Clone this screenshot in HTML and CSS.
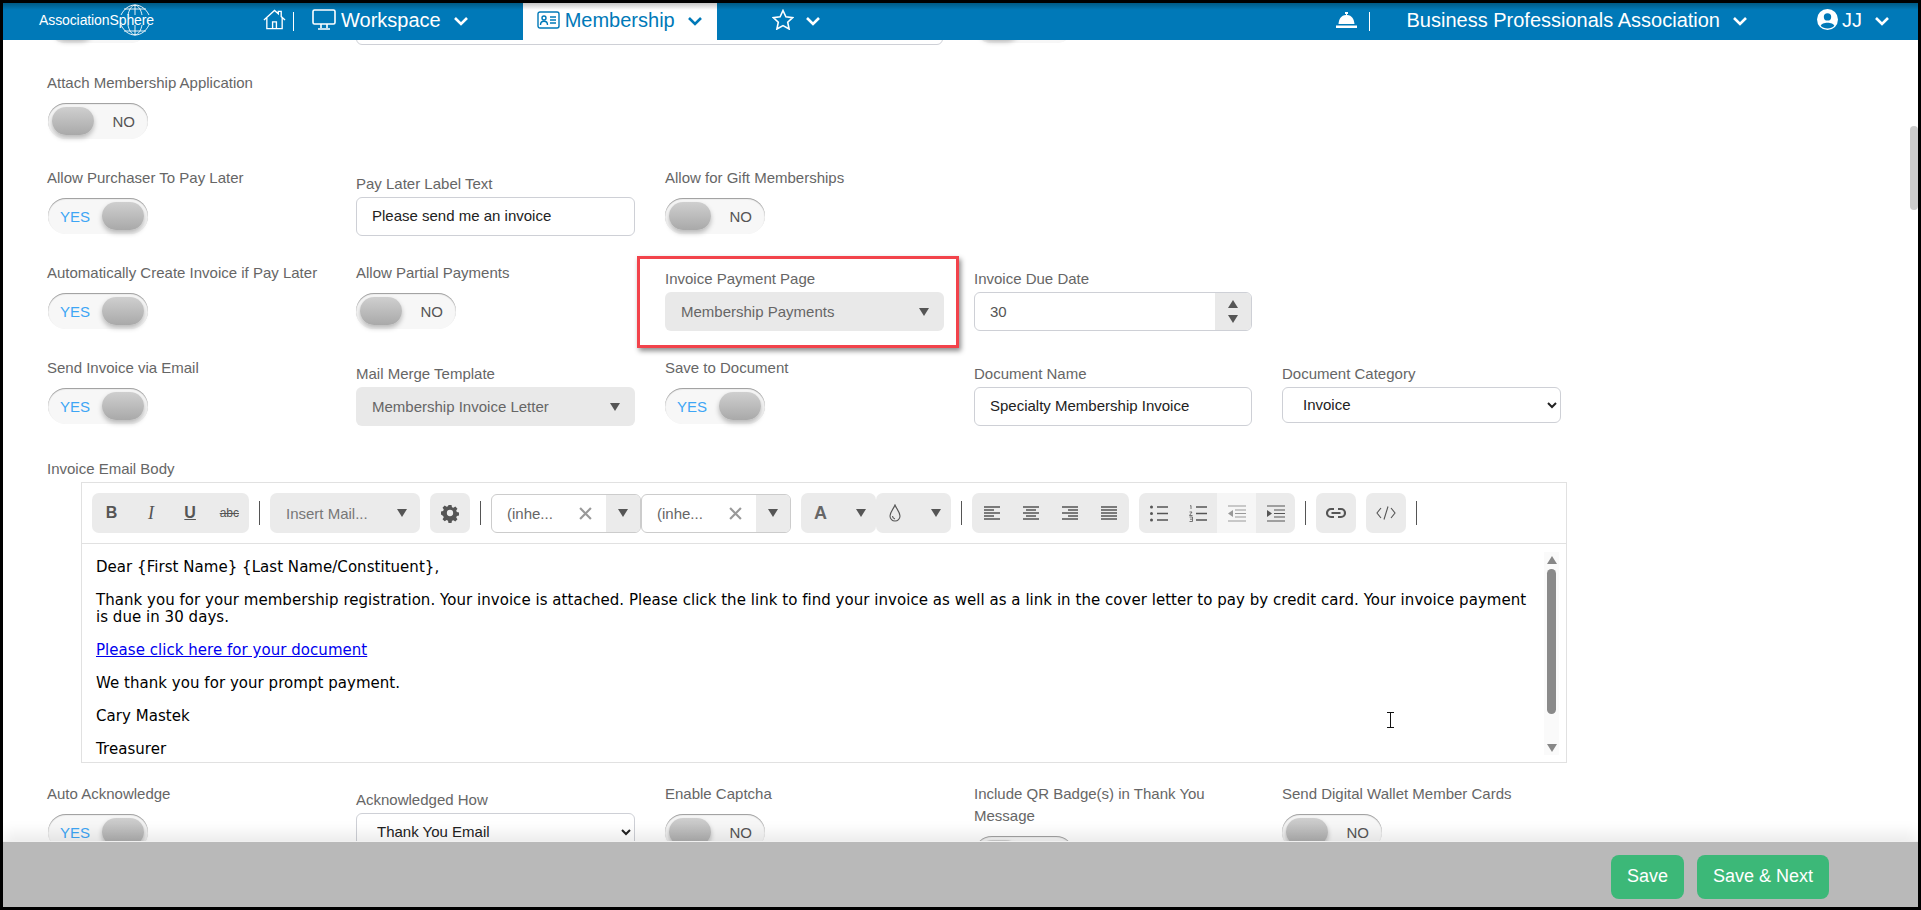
FILE: index.html
```html
<!DOCTYPE html>
<html lang="en">
<head>
    <meta charset="UTF-8">
    <meta name="viewport" content="width=device-width, initial-scale=1.0">
    <title>Membership</title>
    <link rel="stylesheet" href="styles.css">
</head>
<body>
<svg class="sprites" width="0" height="0">
    <symbol id="chev" viewBox="0 0 16 10"><path d="M2 2l6 6 6-6" fill="none" stroke="currentColor" stroke-width="2.6"/></symbol>
    <symbol id="tri" viewBox="0 0 10 8"><path d="M0 0h10L5 8z" fill="currentColor"/></symbol>
</svg>
<div class="frame">
    <header class="topbar">
        <div class="logo">
            <span class="logo-text">AssociationSphere</span>
            <svg class="logo-globe" viewBox="0 0 40 32" fill="none" stroke="#fff" stroke-width="0.9">
                <path d="M6 11C9 5 14 1 20 1s11 4 14 10M13 11c1-5 3-9 7-10 4 1 6 5 7 10M20 1v10M9 5h22"/>
                <path d="M6 21c3 6 8 10 14 10s11-4 14-10M13 21c1 5 3 9 7 10 4-1 6-5 7-10M20 21v10M9 27h22"/>
            </svg>
        </div>
        <svg class="ico-home" viewBox="0 0 24 21" fill="none" stroke="#fff" stroke-width="1.4"><path d="M1 11L12 1l4 3.6V2h3v5.5l4 3.5M4 9v11h16V9M10 20v-7h4v7"/></svg>
        <span class="bar-sep"></span>
        <svg class="ico-monitor" viewBox="0 0 24 21" fill="none" stroke="#fff" stroke-width="1.6"><rect x="1" y="1" width="22" height="14" rx="1.5"/><path d="M9 15v4M15 15v4M6 20h12"/></svg>
        <span class="nav-text">Workspace</span>
        <svg class="chev"><use href="#chev"/></svg>
        <div class="nav-tab">
            <svg class="ico-card" viewBox="0 0 23 18" fill="none" stroke="currentColor" stroke-width="1.4"><rect x="1" y="1" width="21" height="16" rx="2"/><circle cx="7" cy="7" r="2"/><path d="M3.5 14c0-5 7-5 7 0M13 6h6M13 9h6M13 12h6"/></svg>
            <span class="nav-text">Membership</span>
            <svg class="chev"><use href="#chev"/></svg>
        </div>
        <svg class="ico-star" viewBox="0 0 22 21" fill="none" stroke="#fff" stroke-width="1.6"><path d="M11 1.5l2.9 6.3 6.8.8-5 4.6 1.4 6.8-6.1-3.4-6.1 3.4 1.4-6.8-5-4.6 6.8-.8z"/></svg>
        <svg class="chev"><use href="#chev"/></svg>
        <div class="topbar-right">
            <svg class="ico-bell" viewBox="0 0 21 16" fill="#fff"><path d="M9 0h3v2h-1v1c5 .4 7 4 7.500 9h-16C3 7 5 3.400 10 3V2H9zM0 13.500h21V16H0z"/></svg>
            <span class="bar-sep"></span>
            <span class="nav-text org-name">Business Professionals Association</span>
            <svg class="chev"><use href="#chev"/></svg>
            <svg class="ico-user" viewBox="0 0 20 20"><circle cx="10" cy="10" r="10" fill="#fff"/><circle cx="10" cy="7.500" r="3.500" fill="#0079b8"/><path d="M3.500 16c1-4 12-4 13 0-3 3.500-10 3.500-13 0z" fill="#0079b8"/></svg>
            <span class="nav-text user-name">JJ</span>
            <svg class="chev"><use href="#chev"/></svg>
        </div>
    </header>

    <main class="content">
        <div class="form-scroll">
            <div class="form-row first-row">
                <div class="field toggle-only"><div class="toggle off"><span class="knob"></span></div></div>
                <div class="field wide-field"><input class="text-input" type="text"></div>
                <div class="field toggle-only col-four"><div class="toggle off"><span class="knob"></span></div></div>
            </div>

            <div class="form-row">
                <div class="field"><div class="label">Attach Membership Application</div><div class="toggle off"><span class="knob"></span><span class="toggle-text">NO</span></div></div>
            </div>

            <div class="form-row">
                <div class="field"><div class="label">Allow Purchaser To Pay Later</div><div class="toggle on"><span class="toggle-text">YES</span><span class="knob"></span></div></div>
                <div class="field"><div class="label text-label">Pay Later Label Text</div><input class="text-input" type="text" value="Please send me an invoice"></div>
                <div class="field"><div class="label">Allow for Gift Memberships</div><div class="toggle off"><span class="knob"></span><span class="toggle-text">NO</span></div></div>
            </div>

            <div class="form-row">
                <div class="field"><div class="label">Automatically Create Invoice if Pay Later</div><div class="toggle on"><span class="toggle-text">YES</span><span class="knob"></span></div></div>
                <div class="field"><div class="label">Allow Partial Payments</div><div class="toggle off"><span class="knob"></span><span class="toggle-text">NO</span></div></div>
                <div class="field highlighted">
                    <div class="label text-label">Invoice Payment Page</div>
                    <div class="drop-list"><span>Membership Payments</span><svg class="tri"><use href="#tri"/></svg></div>
                    <div class="callout"></div>
                </div>
                <div class="field">
                    <div class="label text-label">Invoice Due Date</div>
                    <div class="num-input"><span class="num-value">30</span><div class="num-steps"><svg class="step"><use href="#tri"/></svg><svg class="step down"><use href="#tri"/></svg></div></div>
                </div>
            </div>

            <div class="form-row">
                <div class="field"><div class="label">Send Invoice via Email</div><div class="toggle on"><span class="toggle-text">YES</span><span class="knob"></span></div></div>
                <div class="field"><div class="label text-label">Mail Merge Template</div><div class="drop-list"><span>Membership Invoice Letter</span><svg class="tri"><use href="#tri"/></svg></div></div>
                <div class="field"><div class="label">Save to Document</div><div class="toggle on"><span class="toggle-text">YES</span><span class="knob"></span></div></div>
                <div class="field"><div class="label text-label">Document Name</div><input class="text-input doc-name" type="text" value="Specialty Membership Invoice"></div>
                <div class="field"><div class="label text-label">Document Category</div><select class="native-select"><option>Invoice</option></select></div>
            </div>

            <div class="editor-block">
                <div class="label">Invoice Email Body</div>
                <div class="editor">
                    <div class="toolbar">
                        <div class="tool-group wide-tools">
                            <span class="tool tool-b">B</span>
                            <span class="tool tool-i">I</span>
                            <span class="tool tool-u">U</span>
                            <span class="tool tool-s">abc</span>
                        </div>
                        <span class="tool-sep"></span>
                        <div class="tool-group merge-drop"><span>Insert Mail...</span><svg class="tri"><use href="#tri"/></svg></div>
                        <div class="tool-group">
                            <span class="tool tool-gear">
                                <svg viewBox="0 0 20 20" fill="#555"><path fill-rule="evenodd" d="M8.300 1h3.400l.5 2.500 1.600.7 2.100-1.400 2.400 2.400-1.400 2.100.7 1.600 2.400.5v3.400l-2.400.5-.7 1.600 1.400 2.100-2.400 2.400-2.100-1.400-1.600.7-.5 2.300H8.300l-.5-2.400-1.600-.7-2.100 1.400-2.400-2.400 1.400-2.100-.7-1.600L0 11.700V8.300l2.400-.5.7-1.600-1.400-2.100 2.400-2.400 2.100 1.400 1.600-.7zM10 6.500a3.500 3.500 0 100 7 3.500 3.500 0 000-7z" transform="translate(1 1) scale(.9)"/></svg>
                            </span>
                        </div>
                        <span class="tool-sep"></span>
                        <div class="tool-pair">
                            <div class="font-pick"><span class="font-value">(inhe...</span><svg class="font-clear" viewBox="0 0 12 12" stroke="#999" stroke-width="2"><path d="M1 1l10 10M11 1L1 11"/></svg><span class="font-arrow"><svg class="tri"><use href="#tri"/></svg></span></div>
                            <div class="font-pick"><span class="font-value">(inhe...</span><svg class="font-clear" viewBox="0 0 12 12" stroke="#999" stroke-width="2"><path d="M1 1l10 10M11 1L1 11"/></svg><span class="font-arrow"><svg class="tri"><use href="#tri"/></svg></span></div>
                        </div>
                        <div class="tool-pair">
                            <div class="tool-group color-drop"><span class="color-a">A</span><svg class="tri"><use href="#tri"/></svg></div>
                            <div class="tool-group color-drop">
                                <svg class="ico-drop" viewBox="0 0 12 18" fill="none" stroke="#555" stroke-width="1.100"><path d="M6 1C4.500 5 1 8 1 12a5 5 0 0010 0C11 8 7.500 5 6 1zM3.500 12c0 1.500 1 2.500 2.500 3"/></svg>
                                <svg class="tri"><use href="#tri"/></svg>
                            </div>
                        </div>
                        <span class="tool-sep"></span>
                        <div class="tool-group wide-tools">
                            <span class="tool"><svg class="ico-lines" viewBox="0 0 16 14" stroke="#555" stroke-width="1.300"><path d="M0 1h16M0 4h10M0 7h16M0 10h10M0 13h16"/></svg></span>
                            <span class="tool"><svg class="ico-lines" viewBox="0 0 16 14" stroke="#555" stroke-width="1.300"><path d="M0 1h16M3 4h10M0 7h16M3 10h10M0 13h16"/></svg></span>
                            <span class="tool"><svg class="ico-lines" viewBox="0 0 16 14" stroke="#555" stroke-width="1.300"><path d="M0 1h16M6 4h10M0 7h16M6 10h10M0 13h16"/></svg></span>
                            <span class="tool"><svg class="ico-lines" viewBox="0 0 16 14" stroke="#555" stroke-width="1.300"><path d="M0 1h16M0 4h16M0 7h16M0 10h16M0 13h16"/></svg></span>
                        </div>
                        <div class="tool-group">
                            <span class="tool"><svg class="ico-list" viewBox="0 0 18 17"><g fill="#555"><circle cx="1.500" cy="2" r="1.500"/><circle cx="1.500" cy="8.500" r="1.500"/><circle cx="1.500" cy="15" r="1.500"/></g><path d="M7 2h11M7 8.500h11M7 15h11" stroke="#555" stroke-width="1.500"/></svg></span>
                            <span class="tool"><svg class="ico-list" viewBox="0 0 18 17"><path d="M1 1l1-.5V4M.5 7h2.500L.5 10.500h3M.5 12h3v4.500h-3M1 14.200h2" fill="none" stroke="#555" stroke-width=".8"/><path d="M7 2h11M7 8.500h11M7 15h11" stroke="#555" stroke-width="1.500"/></svg></span>
                            <span class="tool tool-dim"><svg class="ico-list" viewBox="0 0 18 17"><path d="M0 1h18M7 5h11M7 8.500h11M7 12h11M0 16h18" stroke="#999" stroke-width="1.200"/><path d="M5 5v7L0 8.500z" fill="#999"/></svg></span>
                            <span class="tool"><svg class="ico-list" viewBox="0 0 18 17"><path d="M0 1h18M7 5h11M7 8.500h11M7 12h11M0 16h18" stroke="#555" stroke-width="1.200"/><path d="M0 5v7l5-3.500z" fill="#555"/></svg></span>
                        </div>
                        <span class="tool-sep"></span>
                        <div class="tool-group">
                            <span class="tool tool-sm"><svg class="ico-link" viewBox="0 0 20 12" fill="none" stroke="#555" stroke-width="2.200"><path d="M8 2H5a4 4 0 000 8h3M12 2h3a4 4 0 010 8h-3M5.500 6h9"/></svg></span>
                        </div>
                        <div class="tool-group">
                            <span class="tool tool-sm"><svg class="ico-code" viewBox="0 0 20 14" fill="none" stroke="#555" stroke-width="1.100"><path d="M5 2L1 7l4 5M15 2l4 5-4 5M12 .5L8 13.500"/></svg></span>
                        </div>
                        <span class="tool-sep"></span>
                    </div>
                    <div class="editor-body">
                        <div class="editor-text">
                            <p>Dear {First Name} {Last Name/Constituent},</p>
                            <p>Thank you for your membership registration. Your invoice is attached. Please click the link to find your invoice as well as a link in the cover letter to pay by credit card. Your invoice payment is due in 30 days.</p>
                            <p><a class="doc-link" href="#">Please click here for your document</a></p>
                            <p>We thank you for your prompt payment.</p>
                            <p>Cary Mastek</p>
                            <p>Treasurer</p>
                        </div>
                        <div class="editor-scroll">
                            <svg class="scroll-arrow up"><use href="#tri"/></svg>
                            <span class="scroll-thumb"></span>
                            <svg class="scroll-arrow"><use href="#tri"/></svg>
                        </div>
                        <svg class="ibeam" viewBox="0 0 7 16" fill="none" stroke="#111"><path d="M0 .5h7M0 15.500h7M3.500 .5v15"/></svg>
                    </div>
                </div>
            </div>

            <div class="form-row last-row">
                <div class="field"><div class="label">Auto Acknowledge</div><div class="toggle on"><span class="toggle-text">YES</span><span class="knob"></span></div></div>
                <div class="field"><div class="label text-label">Acknowledged How</div><select class="native-select tall-select"><option>Thank You Email</option></select></div>
                <div class="field"><div class="label">Enable Captcha</div><div class="toggle off"><span class="knob"></span><span class="toggle-text">NO</span></div></div>
                <div class="field"><div class="label">Include QR Badge(s) in Thank You Message</div><div class="toggle off"><span class="knob"></span></div></div>
                <div class="field"><div class="label">Send Digital Wallet Member Cards</div><div class="toggle off"><span class="knob"></span><span class="toggle-text">NO</span></div></div>
            </div>
        </div>
        <span class="page-thumb"></span>
    </main>

    <footer class="savebar">
        <button class="btn-save">Save</button>
        <button class="btn-save">Save &amp; Next</button>
    </footer>
</div>
</body>
</html>
```

FILE: styles.css
```css
* { margin: 0; padding: 0; box-sizing: border-box; }
body { background: #fff; font-family: "Liberation Sans", Arial, sans-serif; overflow: hidden; }
.sprites { position: absolute; }

.frame {
    width: 1921px;
    height: 910px;
    border: 3px solid #000;
    display: flex;
    flex-direction: column;
    overflow: hidden;
}

/* top bar */
.topbar {
    height: 37px;
    flex: none;
    display: flex;
    align-items: center;
    color: #fff;
    background: linear-gradient(#005a84 0, #0079b8 7px);
    position: relative;
    z-index: 2;
}
.logo { margin-left: 36px; width: 116px; height: 37px; position: relative; display: flex; align-items: center; flex: none; }
.logo-text { font-size: 14px; letter-spacing: -0.1px; white-space: nowrap; margin-bottom: 3px; }
.logo-globe { position: absolute; left: 76px; top: 1px; width: 40px; height: 32px; }
.ico-home { width: 23px; height: 21px; margin: 0 0 4px 108px; }
.bar-sep { width: 1px; height: 19px; background: #fff; margin-left: 7px; }
.ico-monitor { width: 24px; height: 21px; margin: 0 0 4px 18px; }
.nav-text { font-size: 20px; margin-left: 5px; white-space: nowrap; padding-bottom: 2px; }
.chev { width: 16px; height: 10px; margin: 0 0 2px 12px; }
.nav-tab {
    width: 194px;
    height: 37px;
    margin-left: 54px;
    padding-left: 14px;
    display: flex;
    align-items: center;
    color: #0079b8;
    background: linear-gradient(#c4c4c4 0, #fff 7px);
}
.ico-card { width: 23px; height: 18px; margin-bottom: 3px; }
.ico-star { width: 22px; height: 21px; margin: 0 0 4px 55px; }
.ico-star + .chev { margin-left: 11px; }
.topbar-right { margin-left: auto; display: flex; align-items: center; padding-right: 28px; }
.ico-bell { width: 21px; height: 16px; margin-bottom: 4px; }
.topbar-right .bar-sep { margin-left: 12px; }
.org-name { margin-left: 37px; }
.ico-user { width: 21px; height: 21px; margin: 0 0 4px 69px; }
.user-name { margin-left: 4px; }

/* form */
.content { flex: 1; min-height: 0; overflow: hidden; position: relative; }
.form-scroll { margin-top: -64px; padding-left: 44px; }
.form-row { display: grid; grid-template-columns: 309px 309px 309px 308px 309px; height: 95px; }
.first-row { height: 96px; }
.field { position: relative; width: 279px; }
.field:first-child .toggle { margin-left: 1px; }
.wide-field { width: 587px; grid-column: span 2; padding-top: 30px; }
.wide-field .text-input { width: 587px; }
.toggle-only { padding-top: 31px; }
.col-four { grid-column: 4; }
.label { font-size: 15px; line-height: 22px; color: #666; margin-bottom: 9px; }
.text-label { padding-top: 6px; margin-bottom: 2px; box-sizing: content-box; }

.toggle {
    width: 100px;
    height: 36px;
    border-radius: 18px;
    background: #f7f7f7;
    box-shadow: inset 0 1px 1px #999;
    display: flex;
    align-items: center;
    justify-content: space-between;
    padding: 0 4px;
    font-size: 15px;
}
.knob {
    width: 42px;
    height: 28px;
    border-radius: 14px;
    background: linear-gradient(#cfcfcf, #a9a9a9);
    box-shadow: 0 3px 5px rgba(0, 0, 0, 0.25);
}
.toggle.off .toggle-text { color: #555; margin-right: 9px; }
.toggle.on .toggle-text { color: #3ea6f5; margin-left: 8px; }

.text-input {
    display: block;
    width: 279px;
    height: 39px;
    border: 1px solid #ced0d6;
    border-radius: 6px;
    padding: 0 15px 2px;
    font: 15px "Liberation Sans", Arial, sans-serif;
    color: #222;
    background: #fff;
}
.text-input.doc-name { width: 278px; }
.drop-list {
    width: 279px;
    height: 39px;
    border-radius: 6px;
    background: #e9e9e9;
    color: #666;
    font-size: 15px;
    padding: 0 15px 0 16px;
    display: flex;
    align-items: center;
    justify-content: space-between;
}
.tri { width: 10px; height: 8px; color: #555; flex: none; }
.num-input {
    width: 278px;
    height: 39px;
    border: 1px solid #ced0d6;
    border-radius: 6px;
    display: flex;
    align-items: center;
    justify-content: space-between;
    font-size: 15px;
    color: #555;
    overflow: hidden;
}
.num-value { padding-left: 15px; }
.num-steps {
    width: 36px;
    height: 100%;
    background: #e9e9e9;
    display: flex;
    flex-direction: column;
    align-items: center;
    justify-content: center;
    gap: 7px;
    color: #555;
}
.step { width: 10px; height: 8px; transform: rotate(180deg); }
.step.down { transform: none; }
.native-select {
    display: block;
    width: 279px;
    height: 36px;
    border: 1px solid #ced0d6;
    border-radius: 6px;
    background: #fff;
    padding: 0 0 2px 16px;
    font: 15px "Liberation Sans", Arial, sans-serif;
    color: #222;
}
.tall-select { height: 39px; }

.callout {
    position: absolute;
    left: -28px;
    top: -6px;
    width: 322px;
    height: 92px;
    border: 3px solid #f2434b;
    box-shadow: 2px 3px 5px rgba(0, 0, 0, 0.45);
}

/* editor */
.editor-block { height: 325px; margin-top: 6px; }
.editor-block .label { margin-bottom: 2px; }
.editor {
    width: 1486px;
    height: 281px;
    margin-left: 34px;
    border: 1px solid #e1e1e1;
}
.toolbar {
    height: 61px;
    border-bottom: 1px solid #e1e1e1;
    display: flex;
    align-items: center;
    gap: 10px;
    padding-left: 10px;
}
.tool-group { display: flex; height: 40px; border-radius: 7px; background: #ebebeb; overflow: hidden; color: #555; flex: none; }
.tool { width: 39px; display: flex; align-items: center; justify-content: center; font-size: 16px; }
.wide-tools .tool { width: 39.25px; }
.tool-b { font-weight: bold; }
.tool-i { font-family: "Liberation Serif", serif; font-style: italic; font-size: 18px; }
.tool-u { font-weight: bold; text-decoration: underline; }
.tool-s { font-size: 12px; text-decoration: line-through; }
.tool-gear { width: 40px; }
.tool-gear svg { width: 20px; height: 20px; }
.tool-sep { width: 1px; height: 24px; background: #555; flex: none; }
.merge-drop { width: 150px; align-items: center; justify-content: space-between; padding: 0 13px 0 16px; font-size: 15px; color: #777; }
.tool-pair { display: flex; flex: none; }
.font-pick {
    width: 150px;
    height: 39px;
    border: 1px solid #ccc;
    border-radius: 6px;
    display: flex;
    align-items: center;
    font-size: 15px;
    color: #666;
    overflow: hidden;
}
.font-value { padding-left: 15px; width: 87px; }
.font-clear { width: 13px; height: 13px; margin-right: 14px; flex: none; }
.font-arrow { flex: 1; height: 100%; background: #ebebeb; display: flex; align-items: center; justify-content: center; }
.color-drop { width: 75px; align-items: center; justify-content: space-between; padding: 0 10px 0 13px; }
.color-a { font-size: 18px; font-weight: bold; color: #666; }
.ico-drop { width: 12px; height: 18px; }
.ico-lines { width: 16px; height: 14px; }
.ico-list { width: 18px; height: 17px; }
.tool-dim { background: #f6f6f6; }
.tool-sm { width: 40px; }
.ico-link { width: 20px; height: 14px; }
.ico-code { width: 20px; height: 14px; }

.editor-body { height: 219px; display: flex; position: relative; overflow: hidden; }
.editor-text {
    flex: 1;
    padding: 15px 14px 0;
    font-family: "DejaVu Sans", Verdana, sans-serif;
    font-size: 15px;
    letter-spacing: 0.04px;
    line-height: 17px;
    color: #000;
}
.editor-text p { margin-bottom: 16px; }
.editor-text p:last-child { margin-bottom: 0; }
.doc-link { color: #0000ee; }
.editor-scroll {
    width: 15px;
    margin: 8px 7px 8px 0;
    background: #fafafa;
    display: flex;
    flex-direction: column;
    align-items: center;
    flex: none;
}
.scroll-arrow { width: 10px; height: 8px; margin-top: 4px; color: #888; flex: none; }
.scroll-arrow.up { transform: rotate(180deg); }
.scroll-thumb { width: 9px; height: 145px; margin: 5px 0 26px; border-radius: 5px; background: #8a8a8a; flex: none; }
.ibeam { position: absolute; left: 1305px; top: 168px; width: 7px; height: 16px; }

.last-row { height: 100px; }
.page-thumb {
    position: absolute;
    right: 0;
    top: 86px;
    width: 8px;
    height: 84px;
    border-radius: 4px;
    background: #ccc;
}

/* save bar */
.savebar {
    height: 66px;
    flex: none;
    position: relative;
    z-index: 2;
    background: #b9b9b9;
    border-top: 1px solid #f0f0f0;
    box-shadow: 0 -8px 14px rgba(0, 0, 0, 0.08);
    display: flex;
    align-items: center;
    justify-content: flex-end;
    gap: 13px;
    padding: 4px 89px 0 0;
}
.btn-save {
    height: 44px;
    padding: 0 16px;
    border: none;
    border-radius: 8px;
    background: #3cb878;
    color: #fff;
    font: 18px "Liberation Sans", Arial, sans-serif;
}
```
